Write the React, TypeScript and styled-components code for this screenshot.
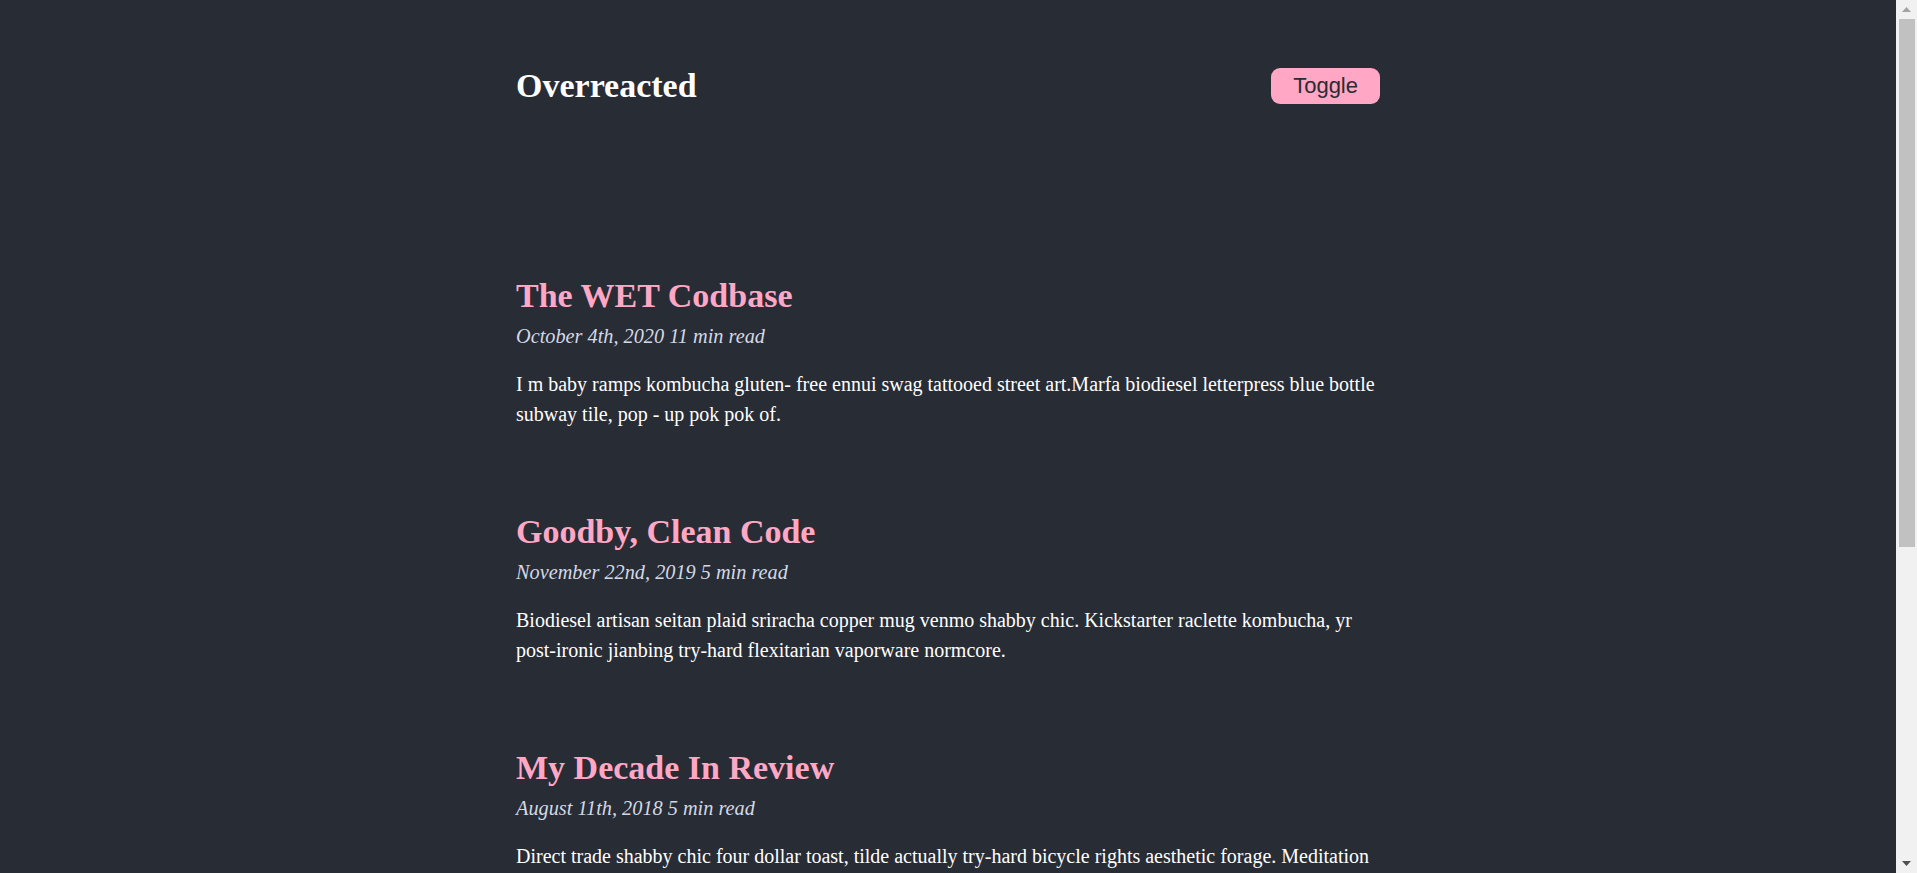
import React from "react";
import styled, { createGlobalStyle } from "styled-components";

const GlobalStyle = createGlobalStyle`
  html, body {
    margin: 0;
    padding: 0;
    background: #282c35;
  }
  body {
    padding-right: 21px;
    font-family: "Liberation Serif", "Times New Roman", serif;
    color: #ffffff;
  }
`;

const Page = styled.div`
  max-width: 864px;
  margin: 0 auto;
  padding: 67px 0 250px;
`;

const Header = styled.header`
  display: flex;
  align-items: center;
  justify-content: space-between;
  margin-bottom: 173px;
`;

const SiteTitle = styled.h1`
  margin: 0;
  font-size: 34px;
  line-height: 37px;
  font-weight: 700;
  color: #ffffff;
`;

const ToggleButton = styled.button`
  font-family: "Liberation Sans", Arial, sans-serif;
  font-size: 22px;
  line-height: 26px;
  padding: 5px 22px;
  height: 36px;
  border: none;
  border-radius: 9px;
  background: #ffa7c4;
  color: #282c35;
  cursor: pointer;
`;

const PostList = styled.main`
  display: flex;
  flex-direction: column;
  gap: 84.5px;
`;

const Post = styled.article`
  display: flex;
  flex-direction: column;
`;

const PostTitle = styled.h3`
  margin: 0;
  font-size: 34px;
  line-height: 37px;
  font-weight: 700;
  color: #ffa7c4;
`;

const PostMeta = styled.small`
  display: block;
  margin-top: 7px;
  font-size: 20.3px;
  line-height: 30px;
  font-style: italic;
  color: #d3d9e5;
`;

const PostBody = styled.p`
  margin: 17.5px 0 0;
  font-size: 20px;
  line-height: 30px;
  color: #ffffff;
`;

/* Fake classic browser scrollbar that overlays the right edge */
const ScrollBar = styled.div`
  position: fixed;
  top: 0;
  right: 0;
  bottom: 0;
  width: 21px;
  background: #f1f1f1;
  display: flex;
  flex-direction: column;
  align-items: stretch;
`;

const ScrollArrow = styled.div<{ $dir: "up" | "down" }>`
  height: 19px;
  display: flex;
  align-items: center;
  justify-content: center;
  color: ${(p) => (p.$dir === "up" ? "#a3a3a3" : "#505050")};
`;

const ScrollThumb = styled.div`
  height: 528px;
  margin: 0 2px 0 3px;
  background: #c1c1c1;
`;

const ScrollRest = styled.div`
  flex: 1;
`;

const Arrow = ({ dir }: { dir: "up" | "down" }) => (
  <ScrollArrow $dir={dir}>
    <svg width="9" height="5" viewBox="0 0 9 5" aria-hidden="true">
      {dir === "up" ? (
        <polygon points="0,5 4.5,0 9,5" fill="currentColor" />
      ) : (
        <polygon points="0,0 4.5,5 9,0" fill="currentColor" />
      )}
    </svg>
  </ScrollArrow>
);

const posts = [
  {
    title: "The WET Codbase",
    meta: "October 4th, 2020 11 min read",
    body:
      "I m baby ramps kombucha gluten- free ennui swag tattooed street art.Marfa biodiesel letterpress blue bottle subway tile, pop - up pok pok of.",
  },
  {
    title: "Goodby, Clean Code",
    meta: "November 22nd, 2019 5 min read",
    body:
      "Biodiesel artisan seitan plaid sriracha copper mug venmo shabby chic. Kickstarter raclette kombucha, yr post-ironic jianbing try-hard flexitarian vaporware normcore.",
  },
  {
    title: "My Decade In Review",
    meta: "August 11th, 2018 5 min read",
    body:
      "Direct trade shabby chic four dollar toast, tilde actually try-hard bicycle rights aesthetic forage. Meditation tumblr banjo, fingerstache beard vexillologist poutine.",
  },
  {
    title: "What Are the React Team Principles?",
    meta: "June 2nd, 2018 8 min read",
    body:
      "Sartorial cold-pressed helvetica, kinfolk pitchfork gentrify lumbersexual. Hashtag selvage cloud bread, lo-fi chambray waistcoat authentic.",
  },
];

export default function App() {
  return (
    <>
      <GlobalStyle />
      <Page>
        <Header>
          <SiteTitle>Overreacted</SiteTitle>
          <ToggleButton type="button">Toggle</ToggleButton>
        </Header>
        <PostList>
          {posts.map((p) => (
            <Post key={p.title}>
              <PostTitle>{p.title}</PostTitle>
              <PostMeta>{p.meta}</PostMeta>
              <PostBody>{p.body}</PostBody>
            </Post>
          ))}
        </PostList>
      </Page>
      <ScrollBar aria-hidden="true">
        <Arrow dir="up" />
        <ScrollThumb />
        <ScrollRest />
        <Arrow dir="down" />
      </ScrollBar>
    </>
  );
}
